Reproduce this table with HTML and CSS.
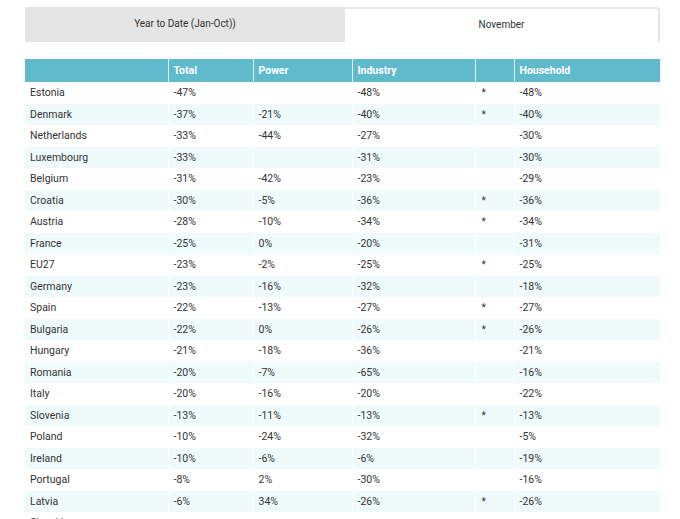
FILE: index.html
```html
<!DOCTYPE html>
<html>
<head>
<meta charset="utf-8">
<link rel="stylesheet" href="styles.css">
</head>
<body>
<div class="wrap">
  <div class="tabs">
    <div class="tab">Year to Date (Jan-Oct))</div>
    <div class="tab active">November</div>
  </div>
  <table class="data">
    <colgroup>
      <col class="c1"><col class="c2"><col class="c3"><col class="c4"><col class="c5"><col class="c6">
    </colgroup>
    <thead>
      <tr><th></th><th>Total</th><th>Power</th><th>Industry</th><th></th><th>Household</th></tr>
    </thead>
    <tbody>
      <tr><td>Estonia</td><td>-47%</td><td></td><td>-48%</td><td class="ast">*</td><td>-48%</td></tr>
      <tr><td>Denmark</td><td>-37%</td><td>-21%</td><td>-40%</td><td class="ast">*</td><td>-40%</td></tr>
      <tr><td>Netherlands</td><td>-33%</td><td>-44%</td><td>-27%</td><td class="ast"></td><td>-30%</td></tr>
      <tr><td>Luxembourg</td><td>-33%</td><td></td><td>-31%</td><td class="ast"></td><td>-30%</td></tr>
      <tr><td>Belgium</td><td>-31%</td><td>-42%</td><td>-23%</td><td class="ast"></td><td>-29%</td></tr>
      <tr><td>Croatia</td><td>-30%</td><td>-5%</td><td>-36%</td><td class="ast">*</td><td>-36%</td></tr>
      <tr><td>Austria</td><td>-28%</td><td>-10%</td><td>-34%</td><td class="ast">*</td><td>-34%</td></tr>
      <tr><td>France</td><td>-25%</td><td>0%</td><td>-20%</td><td class="ast"></td><td>-31%</td></tr>
      <tr><td>EU27</td><td>-23%</td><td>-2%</td><td>-25%</td><td class="ast">*</td><td>-25%</td></tr>
      <tr><td>Germany</td><td>-23%</td><td>-16%</td><td>-32%</td><td class="ast"></td><td>-18%</td></tr>
      <tr><td>Spain</td><td>-22%</td><td>-13%</td><td>-27%</td><td class="ast">*</td><td>-27%</td></tr>
      <tr><td>Bulgaria</td><td>-22%</td><td>0%</td><td>-26%</td><td class="ast">*</td><td>-26%</td></tr>
      <tr><td>Hungary</td><td>-21%</td><td>-18%</td><td>-36%</td><td class="ast"></td><td>-21%</td></tr>
      <tr><td>Romania</td><td>-20%</td><td>-7%</td><td>-65%</td><td class="ast"></td><td>-16%</td></tr>
      <tr><td>Italy</td><td>-20%</td><td>-16%</td><td>-20%</td><td class="ast"></td><td>-22%</td></tr>
      <tr><td>Slovenia</td><td>-13%</td><td>-11%</td><td>-13%</td><td class="ast">*</td><td>-13%</td></tr>
      <tr><td>Poland</td><td>-10%</td><td>-24%</td><td>-32%</td><td class="ast"></td><td>-5%</td></tr>
      <tr><td>Ireland</td><td>-10%</td><td>-6%</td><td>-6%</td><td class="ast"></td><td>-19%</td></tr>
      <tr><td>Portugal</td><td>-8%</td><td>2%</td><td>-30%</td><td class="ast"></td><td>-16%</td></tr>
      <tr><td>Latvia</td><td>-6%</td><td>34%</td><td>-26%</td><td class="ast">*</td><td>-26%</td></tr>
      <tr><td>Slovakia</td><td></td><td></td><td></td><td class="ast"></td><td></td></tr>
    </tbody>
  </table>
</div>
</body>
</html>
```

FILE: styles.css
```css
html, body {
  margin: 0;
  padding: 0;
  background: #ffffff;
}
body {
  font-family: Roboto, "Liberation Sans", sans-serif;
  color: #333333;
  font-size: 10.5px;
}
.wrap {
  width: 635px;
  padding: 7px 0 0 25px;
}
.tabs {
  display: flex;
  height: 35px;
}
.tab {
  flex: 0 0 320px;
  background: #e5e5e5;
  display: flex;
  align-items: center;
  justify-content: center;
  font-size: 10px;
  color: #333333;
  padding-bottom: 2px;
  box-sizing: border-box;
}
.tab.active {
  flex: 0 0 315px;
  background: #ffffff;
  border-top: 2px solid #e6e6e6;
  border-right: 2px solid #e6e6e6;
  border-top-right-radius: 4px;
}
.data {
  margin-top: 17px;
  width: 635px;
  border-collapse: collapse;
  table-layout: fixed;
}
.c1 { width: 143px; }
.c2 { width: 85px; }
.c3 { width: 99px; }
.c4 { width: 123px; }
.c5 { width: 39px; }
.c6 { width: 146px; }
.data th {
  background: #5fbacc;
  color: #ffffff;
  font-weight: 700;
  text-align: left;
  height: 23px;
  padding: 0 0 0 5px;
  border-left: 1px solid #e6f6f8;
  font-size: 10.5px;
}
.data th:first-child,
.data td:first-child {
  border-left: none;
}
.data td {
  height: 21.5px;
  padding: 0 0 0 5px;
  border-left: 1px solid #ffffff;
  white-space: nowrap;
}
.data tbody tr:nth-child(even) td {
  background: #effbfb;
}
.data td.ast {
  padding-left: 6px;
  vertical-align: middle;
  font-size: 10px;
}
```
